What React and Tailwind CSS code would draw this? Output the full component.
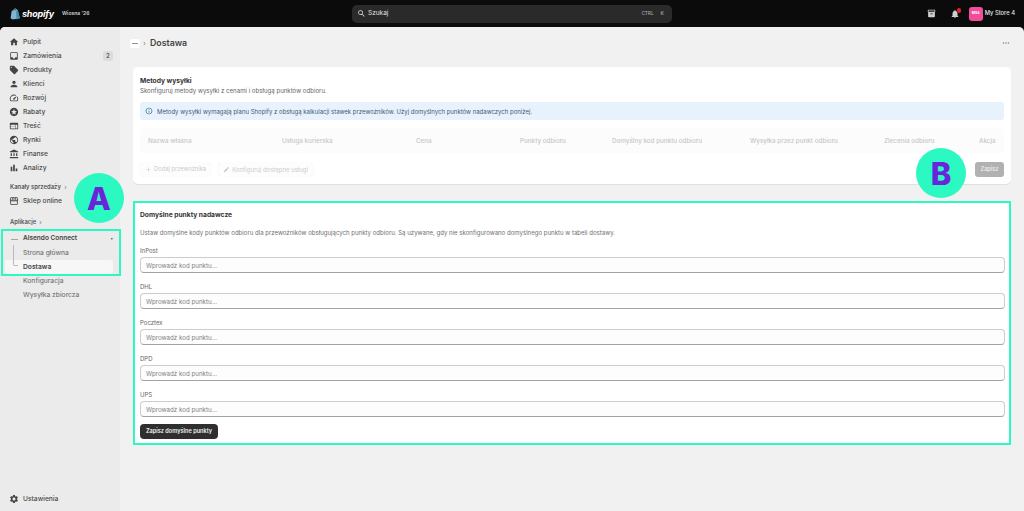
import React from "react";
import {
  MdHome, MdInbox, MdLocalOffer, MdPerson, MdSpeed, MdStars, MdWeb, MdPublic,
  MdAccountBalance, MdBarChart, MdStorefront, MdSettings, MdChevronRight,
  MdInfoOutline, MdAdd, MdEdit, MdNotifications, MdSearch, MdMoreHoriz, MdInventory2,
} from "react-icons/md";

const mainNav = [
  { label: "Pulpit", icon: MdHome },
  { label: "Zamówienia", icon: MdInbox, badge: "2" },
  { label: "Produkty", icon: MdLocalOffer },
  { label: "Klienci", icon: MdPerson },
  { label: "Rozwój", icon: MdSpeed },
  { label: "Rabaty", icon: MdStars },
  { label: "Treść", icon: MdWeb },
  { label: "Rynki", icon: MdPublic },
  { label: "Finanse", icon: MdAccountBalance },
  { label: "Analizy", icon: MdBarChart },
];

const tableColumns = [
  "Nazwa własna",
  "Usługa kurierska",
  "Cena",
  "Punkty odbioru",
  "Domyślny kod punktu odbioru",
  "Wysyłka przez punkt odbioru",
  "Zlecenia odbioru",
  "Akcja",
];

const carriers = ["InPost", "DHL", "Pocztex", "DPD", "UPS"];

const NavRow = ({ item }) => {
  const Icon = item.icon;
  return (
    <div className="flex h-[14px] items-center pl-[9px] pr-[7px] text-[6.7px] font-medium text-[#4a4a4a]">
      <Icon className="h-[10px] w-[10px] text-[#444]" />
      <span className="ml-[4px] flex-1">{item.label}</span>
      {item.badge && (
        <span className="flex h-[10px] w-[10px] items-center justify-center rounded-[3px] bg-[#dcdcdc] text-[5.5px] font-semibold">
          {item.badge}
        </span>
      )}
    </div>
  );
};

const SectionLabel = ({ children, className }) => (
  <div className={`flex h-[14px] items-center pl-[10px] text-[5.9px] font-semibold text-[#555] ${className}`}>
    {children}
    <MdChevronRight className="ml-[1px] h-[7px] w-[7px] text-[#888]" />
  </div>
);

const Sidebar = () => (
  <aside className="flex w-[120px] shrink-0 flex-col bg-[#ebebeb] pb-[5px] pt-[8px]">
    {mainNav.map((item) => (
      <NavRow key={item.label} item={item} />
    ))}
    <SectionLabel className="mt-[5px]">Kanały sprzedaży</SectionLabel>
    <NavRow item={{ label: "Sklep online", icon: MdStorefront }} />
    <SectionLabel className="mt-[7px]">Aplikacje</SectionLabel>

    <div className="relative z-10 ml-[3px] mt-[2px] w-[116px] pt-[1px] outline-2 outline-[#2cf8c2]">
      <div className="flex h-[14px] items-center pl-[8px] pr-[6px] text-[6.5px] font-semibold text-[#444]">
        <span className="h-px w-[7px] bg-[#a5a5a5]" />
        <span className="ml-[5px] flex-1">Alsendo Connect</span>
        <span className="text-[5px] text-[#555]">•</span>
      </div>
      <div className="flex h-[14px] items-center pl-[20px] text-[6.7px] font-medium text-[#777]">Strona główna</div>
      <div className="ml-[2px] flex h-[14px] w-[108px] items-center rounded-[3px] bg-[#f7f7f7] pl-[18px] text-[6.7px] font-semibold text-[#444]">
        Dostawa
      </div>
      <span className="absolute left-[10px] top-[14px] h-[21px] w-[5px] rounded-bl-[2px] border-b border-l border-[#bbb]" />
    </div>

    <div className="flex h-[14px] items-center pl-[23px] text-[6.7px] font-medium text-[#777]">Konfiguracja</div>
    <div className="flex h-[14px] items-center pl-[23px] text-[6.7px] font-medium text-[#777]">Wysyłka zbiorcza</div>

    <div className="mt-auto">
      <NavRow item={{ label: "Ustawienia", icon: MdSettings }} />
    </div>
  </aside>
);

const TopBar = () => (
  <header className="flex h-[27px] shrink-0 items-center bg-[#0b0b0b] pl-[10px] pr-[9px] text-white">
    <div className="flex w-[342px] items-center">
      <svg viewBox="0 0 20 22" className="h-[12px] w-[11px]">
        <path d="M3 5 L14 3 L18 19 L5 21 L1 19 Z" fill="#7fb6d6" />
        <path d="M14 3 L18 19 L12 21 L11 4 Z" fill="#3f8fb5" />
        <path d="M7 5 C7 1 11 0 12 4" fill="none" stroke="#dff0f5" strokeWidth="1.4" />
      </svg>
      <span className="ml-[1px] text-[9px] font-bold italic leading-none tracking-[-0.2px]">shopify</span>
      <span className="ml-[8px] text-[5px] font-semibold text-[#d5d5d5]">Wiosna '26</span>
    </div>

    <div className="flex h-[18px] w-[320px] items-center rounded-[5px] bg-[#2a2a2a] pl-[5px] pr-[8px]">
      <MdSearch className="h-[9px] w-[9px] text-[#dddddd]" />
      <span className="ml-[2px] flex-1 text-[6.5px] text-[#e3e3e3]">Szukaj</span>
      <span className="text-[4.7px] font-medium text-[#a8a8a8]">CTRL</span>
      <span className="ml-[7px] text-[5px] font-medium text-[#a8a8a8]">K</span>
    </div>

    <div className="ml-auto flex items-center">
      <MdInventory2 className="h-[9px] w-[9px] text-[#cfcfcf]" />
      <div className="relative ml-[14px] h-[10px] w-[10px]">
        <MdNotifications className="h-[10px] w-[10px] text-[#cfcfcf]" />
        <span className="absolute -right-[1px] -top-[1px] h-[5px] w-[4px] rounded-full bg-[#e5202e]" />
      </div>
      <div className="ml-[9px] flex h-[14px] w-[14px] items-center justify-center rounded-[3px] bg-[#f04e9b] text-[3.5px] font-bold text-white">
        MS4
      </div>
      <span className="ml-[2px] text-[5.8px] font-medium text-[#e3e3e3]">My Store 4</span>
    </div>
  </header>
);

const MethodsCard = () => (
  <section className="mt-[14px] rounded-[5px] bg-white px-[7px] pb-[7px] pt-[8px] shadow-[0_1px_0_#e0e0e0]">
    <h2 className="h-[10px] text-[6.7px] font-bold leading-[12px] text-[#333]">Metody wysyłki</h2>
    <p className="h-[10px] text-[6.1px] leading-[11px] text-[#666]">
      Skonfiguruj metody wysyłki z cenami i obsługą punktów odbioru.
    </p>
    <div className="mt-[7px] flex h-[18px] items-center rounded-[3px] bg-[#e8f2fc] pl-[5px] text-[6px] text-[#3d5a75]">
      <MdInfoOutline className="h-[8px] w-[8px] text-[#1d5f8f]" />
      <span className="ml-[4px] pt-[1px]">
        Metody wysyłki wymagają planu Shopify z obsługą kalkulacji stawek przewoźników. Użyj domyślnych punktów nadawczych poniżej.
      </span>
    </div>
    <div className="mt-[8px] grid h-[25px] grid-cols-[134px_134px_104px_92px_138px_134px_95px_1fr] items-center rounded-[3px] bg-[#fcfcfc] pl-[8px] pt-[3px] text-[6.3px] font-medium text-[#c6c6c6]">
      {tableColumns.map((column) => (
        <span key={column}>{column}</span>
      ))}
    </div>
    <div className="mt-[9px] flex h-[15px] items-center">
      <span className="flex h-[13px] items-center rounded-[3px] bg-[#fdfdfd] px-[5px] text-[5.8px] text-[#cccccc] shadow-[0_0_1px_#ddd]">
        <MdAdd className="mr-[2px] h-[7px] w-[7px]" />
        Dodaj przewoźnika
      </span>
      <span className="ml-[7px] flex h-[13px] items-center rounded-[3px] bg-[#fdfdfd] px-[5px] text-[6px] text-[#cccccc] shadow-[0_0_1px_#ddd]">
        <MdEdit className="mr-[2px] h-[7px] w-[7px]" />
        Konfiguruj dostępne usługi
      </span>
      <span className="ml-auto flex h-[15px] w-[29px] items-center justify-center rounded-[3px] bg-[#b1b1b1] text-[5.5px] font-semibold text-[#ececec]">
        Zapisz
      </span>
    </div>
  </section>
);

const DefaultsCard = () => (
  <section className="mt-[17px] border-2 border-[#2cf8c2] bg-white pb-[4px] pl-[5px] pr-[4px] pt-[6px]">
    <h2 className="h-[10px] text-[6.7px] font-bold leading-[12px] text-[#333]">Domyślne punkty nadawcze</h2>
    <p className="mt-[8px] h-[10px] text-[6.07px] leading-[12px] text-[#707070]">
      Ustaw domyślne kody punktów odbioru dla przewoźników obsługujących punkty odbioru. Są używane, gdy nie skonfigurowano domyślnego punktu w tabeli dostawy.
    </p>
    {carriers.map((carrier) => (
      <div key={carrier}>
        <label className="mt-[8px] block h-[10px] text-[6px] leading-[11px] text-[#666]">{carrier}</label>
        <input
          readOnly
          placeholder="Wprowadź kod punktu..."
          className="mt-[2px] block h-[16px] w-full rounded-[4px] border border-[#cccccc] border-b-[#a3a3a3] bg-[#fdfdfd] px-[5px] text-[6.2px] outline-none placeholder:text-[#808080]"
        />
      </div>
    ))}
    <button className="mt-[7px] flex h-[15px] w-[78px] items-center justify-center rounded-[4px] bg-[#2f2f2f] text-[5.6px] font-semibold text-[#f2f2f2]">
      Zapisz domyślne punkty
    </button>
  </section>
);

const Marker = ({ letter, className }) => (
  <div className={`absolute z-20 flex items-center justify-center rounded-full bg-[#2cf8c2] text-[31px] font-extrabold leading-none text-[#6a24d9] ${className}`}>
    {letter}
  </div>
);

export default function App() {
  return (
    <div className="relative flex h-screen flex-col overflow-hidden bg-[#0b0b0b] font-['Inter',sans-serif]">
      <TopBar />
      <div className="flex min-h-0 flex-1 overflow-hidden rounded-t-[5px] bg-[#f1f1f1]">
        <Sidebar />
        <main className="min-w-0 flex-1 px-[13px] pt-[6px]">
          <div className="flex h-[20px] items-center">
            <span className="-ml-[3px] flex h-[9px] w-[10px] items-center justify-center rounded-[2px] bg-white">
              <span className="h-px w-[6px] bg-[#8f8fb0]" />
            </span>
            <MdChevronRight className="ml-px h-[7px] w-[7px] text-[#888]" />
            <h1 className="ml-[2px] text-[8.8px] font-semibold text-[#444]">Dostawa</h1>
            <MdMoreHoriz className="ml-auto h-[10px] w-[10px] text-[#888]" />
          </div>
          <MethodsCard />
          <DefaultsCard />
        </main>
      </div>
      <Marker letter="A" className="left-[74px] top-[173px] h-[50px] w-[50px]" />
      <Marker letter="B" className="left-[916px] top-[148px] h-[50px] w-[50px]" />
    </div>
  );
}
